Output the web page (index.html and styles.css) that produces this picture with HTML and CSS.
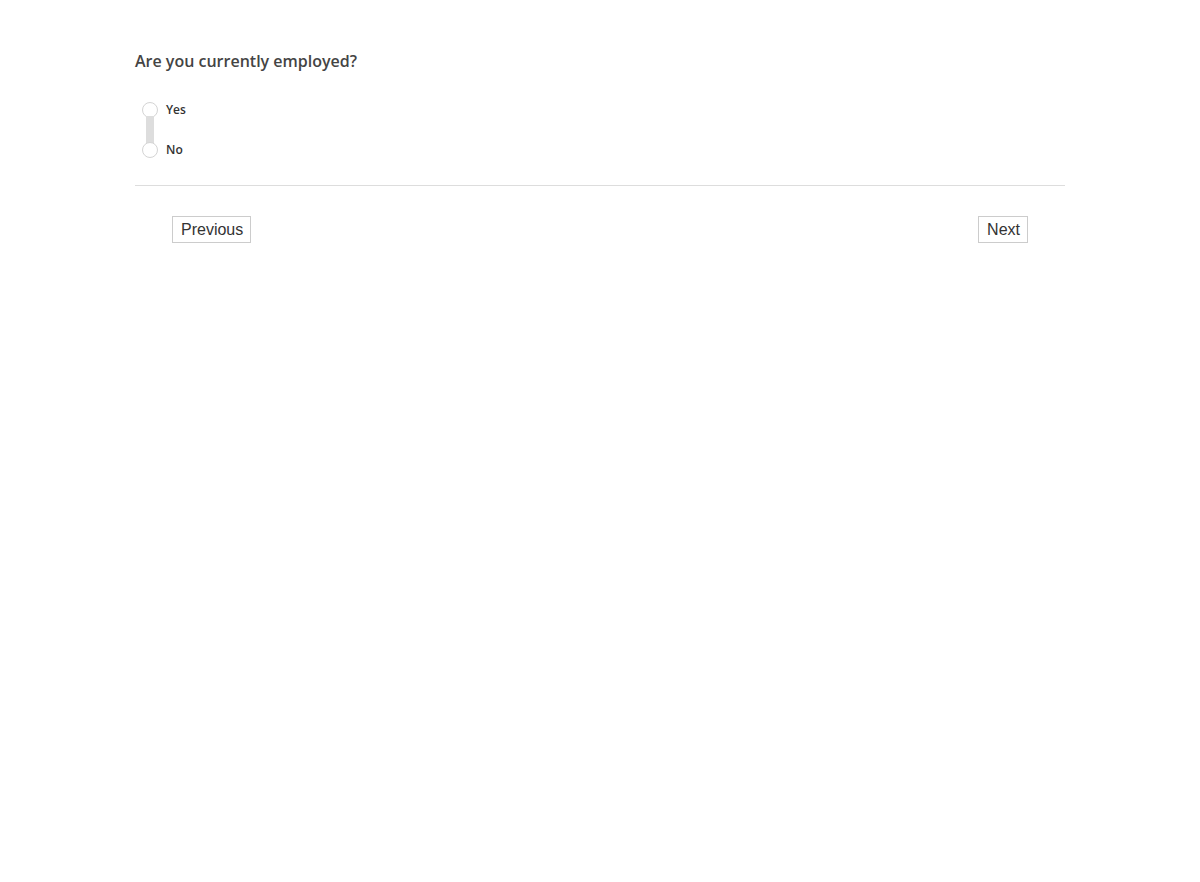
FILE: index.html
```html
<!DOCTYPE html>
<html lang="en">
<head>
    <meta charset="UTF-8">
    <meta name="viewport" content="width=device-width, initial-scale=1.0">
    <title>Survey</title>
    <link rel="stylesheet" href="styles.css">
</head>
<body>
    <div class="survey">
        <h2 class="question">Are you currently employed?</h2>
        <div class="choices">
            <span class="dot"></span>
            <label class="choice-label">Yes</label>
            <span class="bar"></span>
            <span></span>
            <span class="dot"></span>
            <label class="choice-label">No</label>
        </div>
        <hr class="divider">
        <div class="nav">
            <button class="nav-btn" type="button">Previous</button>
            <button class="nav-btn" type="button">Next</button>
        </div>
    </div>
</body>
</html>
```

FILE: styles.css
```css
body {
    margin: 0;
    background: #fff;
    font-family: "Open Sans", sans-serif;
}

.survey {
    width: 930px;
    margin: 0 auto;
    padding-top: 50px;
}

.question {
    margin: 0;
    font-size: 16px;
    font-weight: 600;
    line-height: 22px;
    color: #444;
}

.choices {
    display: grid;
    grid-template-columns: 16px 1fr;
    grid-template-rows: 16px 24px 16px;
    column-gap: 8px;
    margin: 30px 0 0 7px;
}

.dot {
    width: 16px;
    height: 16px;
    box-sizing: border-box;
    border: 1px solid #d4d4d4;
    border-radius: 50%;
    background: #fff;
}

.bar {
    justify-self: center;
    width: 8px;
    margin: -2px 0;
    background: #ddd;
}

.choice-label {
    font-size: 12px;
    font-weight: 600;
    line-height: 16px;
    color: #333;
}

.divider {
    margin: 27px 0 0;
    border: none;
    border-top: 1px solid #ddd;
}

.nav {
    display: flex;
    justify-content: space-between;
    padding: 30px 37px 0;
}

.nav-btn {
    font-family: "Liberation Sans", Arial, sans-serif;
    font-size: 16px;
    line-height: 19px;
    padding: 3px 7px 3px 8px;
    color: #333;
    background: #fff;
    border: 1px solid #ccc;
    border-radius: 0;
}
```
